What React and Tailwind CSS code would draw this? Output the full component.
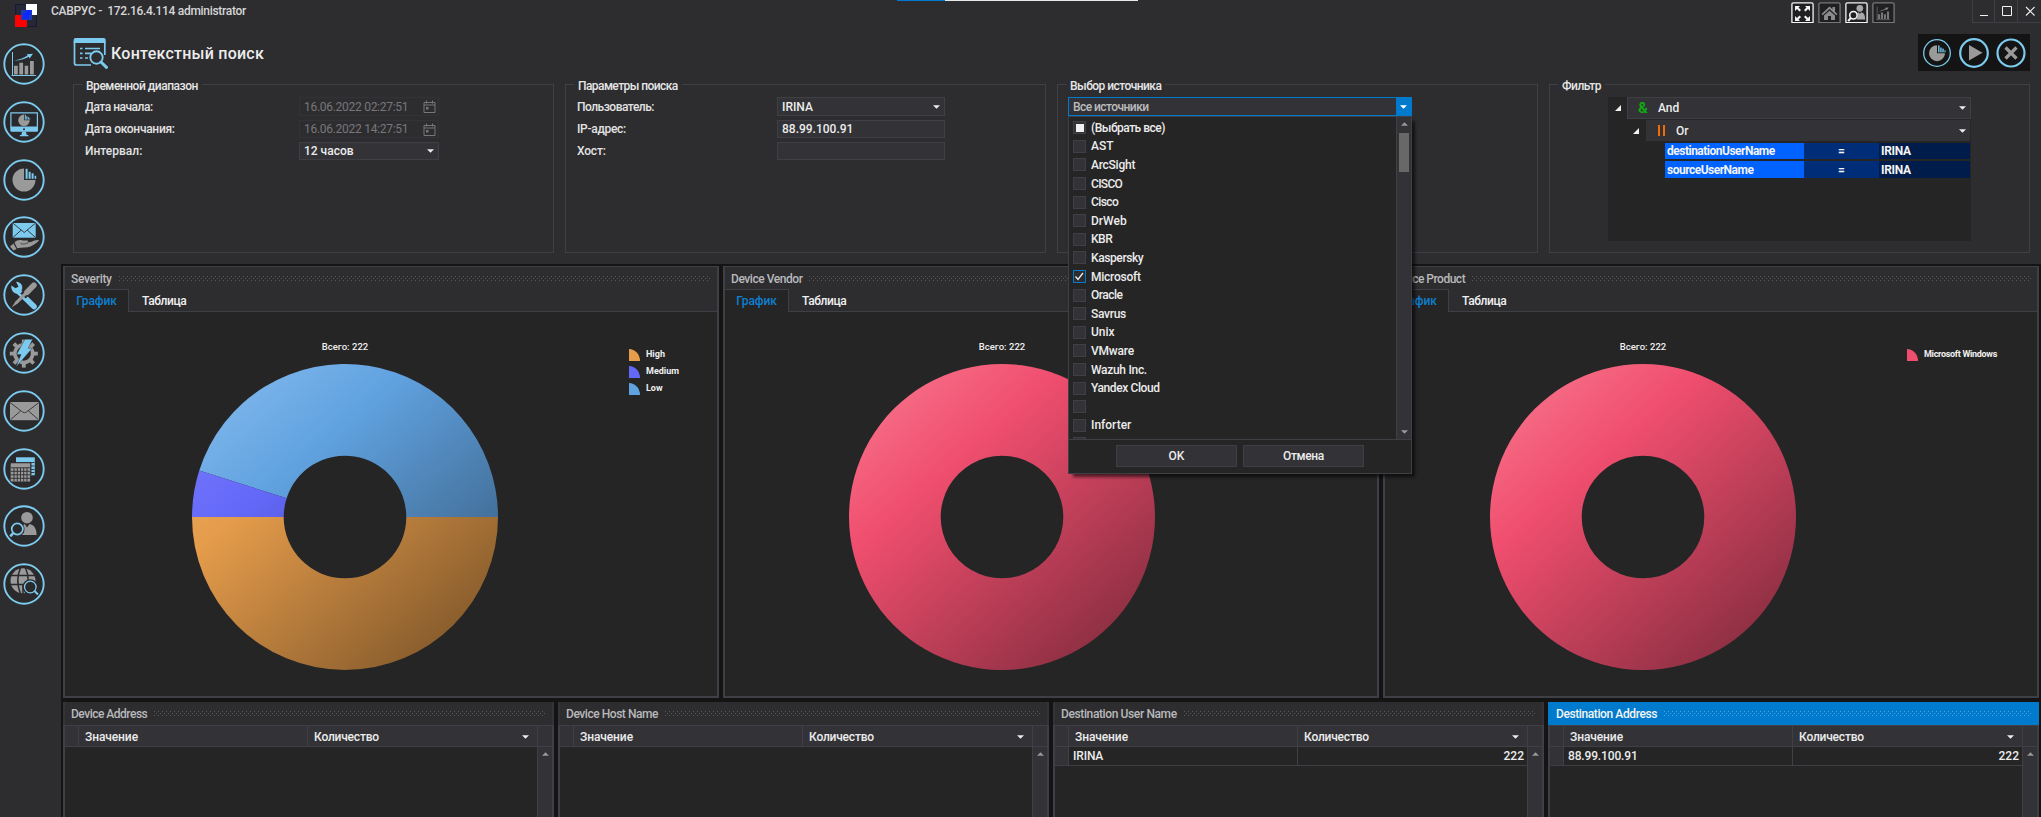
import React from "react";

const B = "#7ccbee";
const G = "#9a9a9b";
const D = "#2d2d30";

function Pie({ cx, cy, r, s = 1 }) {
  return (
    <g>
      <path d={`M${cx} ${cy - r} A${r} ${r} 0 1 0 ${cx + r} ${cy} H${cx} Z`} fill={G} />
      <g fill={B} transform={`translate(${cx + 1.6 * s} ${cy - r + 0.3 * s}) scale(${s})`}>
        <rect x="0" y="0" width="2" height="10" />
        <rect x="3" y="3" width="2" height="7" />
        <rect x="6" y="4.5" width="2" height="5.5" />
        <rect x="9" y="7" width="1.6" height="3" />
      </g>
    </g>
  );
}

function BarChart({ axis, bar }) {
  return (
    <g>
      <path d="M9.5 9V32.5M8.5 32.5H33" stroke={axis} strokeWidth="1" fill="none" />
      <path d="M11 22.7h3.8v8.7H11zM16.3 19.7h3.8v11.7h-3.8zM21.7 22.7h3.5v8.7h-3.5zM27 18h3.8v13.400H27z" fill={bar} />
      <path d="M11 17.500C17 17.600 21.500 16 25.800 13.800L26.600 15.600L30 10.800L23.800 11.200L24.600 12.400C20.500 15 16 16.500 11 17.500Z" fill={axis} />
    </g>
  );
}

function Person({ lens, body }) {
  return (
    <g>
      <circle cx="24" cy="12.700" r="5.800" fill={body} />
      <path d="M18.700 30C20.500 29 21.500 27 21.500 24C21.500 22 20.500 20.500 20.300 20L21.800 19L24 22.500L26.500 19C31.500 20 33.600 24 33.600 30Z" fill={body} />
      <circle cx="14.300" cy="24" r="5.600" fill="none" stroke={lens} strokeWidth="1.700" />
      <path d="M10.200 28L7.300 31.300" stroke={lens} strokeWidth="2.600" />
    </g>
  );
}

function Ring({ children }) {
  return (
    <svg viewBox="0 0 42 42" className="block h-[42px] w-[42px] shrink-0">
      <circle cx="21" cy="21" r="19.700" fill="#2a2a2d" stroke={B} strokeWidth="1.900" />
      {children}
    </svg>
  );
}

function Sidebar() {
  const teeth = [0, 45, 90, 135, 180, 225, 270, 315];
  return (
    <nav className="flex w-[61px] shrink-0 flex-col gap-[15.8px] pt-[20px] pl-[3px]">
      <Ring><BarChart axis={B} bar={G} /></Ring>
      <Ring>
        <path d="M7.900 11.800H34.400V26H7.900Z" fill="none" stroke={B} strokeWidth="1.200" />
        <path d="M7.300 26H35V29.500Q35 30.700 33.800 30.700H8.500Q7.300 30.700 7.300 29.500Z" fill={B} />
        <circle cx="21" cy="28.300" r="1" fill={D} />
        <path d="M19 30.700H23L23.600 33.800L25.500 34.200V35.200H16.800V34.200L18.500 33.800Z" fill={B} />
        <Pie cx={21} cy={19.3} r={5.8} s={0.5} />
      </Ring>
      <Ring><Pie cx={21} cy={21} r={11.5} /></Ring>
      <Ring>
        <rect x="9.700" y="7" width="23" height="14.700" fill={B} />
        <path d="M9.700 7L21.200 16.500L32.700 7M9.700 21.700L18.300 14M32.700 21.700L24.200 14" stroke={D} strokeWidth="0.900" fill="none" />
        <path d="M7 30.500L10.500 27.500L13.500 33L10.500 34.500ZM11.500 26.500C14 24 17 23.500 19.500 24.500L24 24.600C25.500 24.700 25.400 26.300 24 26.500L28 26C31 24.500 34 23.500 36 24.200C34.500 26.500 31 28.500 28 30.200C24 31.800 19 31.500 14.200 32.200Z" fill={G} />
        <path d="M17.500 27.500C20 28.500 22.500 28 25 26.800" stroke={D} strokeWidth="0.700" fill="none" />
      </Ring>
      <Ring>
        <path d="M14.500 16.500L31 32.500" stroke={B} strokeWidth="5.600" strokeLinecap="round" />
        <path d="M8.300 11.500L13 14.500L15.500 12.500L13 7.800C17.500 7.600 20.300 11.500 19 15.500L15.500 19.800C11 20 7.800 16.500 8.300 11.500Z" fill={B} />
        <path d="M20 22L31 10.500" stroke={D} strokeWidth="7.500" />
        <path d="M8.600 33.400L12.400 27.400L22.500 17.300L24.800 19.500L14.700 29.600Z" fill={G} />
        <path d="M24 18.200L30.900 11.200" stroke={G} strokeWidth="5.600" strokeLinecap="round" />
      </Ring>
      <Ring>
        <g fill={G}>
          {teeth.map((a) => (
            <rect key={a} x="18.900" y="7.600" width="3.800" height="5" transform={`rotate(${a} 20.800 21.600)`} />
          ))}
        </g>
        <circle cx="20.800" cy="21.600" r="8.900" fill="none" stroke={G} strokeWidth="3.600" />
        <path d="M22 7.200H29.600L25.200 16.300H29.300L13 35L18 22.400H13.600Z" fill={B} stroke="#2a2a2d" strokeWidth="0.400" />
      </Ring>
      <Ring>
        <rect x="7" y="12" width="29" height="18.200" fill={G} />
        <path d="M7 12.500L19.500 22Q21.500 23.500 23.500 22L36 12.500M7.500 29.700L17.500 21M35.500 29.700L25.500 21" stroke="#3a3a3d" strokeWidth="1" fill="none" />
      </Ring>
      <Ring>
        <rect x="13" y="9.300" width="18.800" height="18" fill={B} />
        <path d="M28 14.500V27M13 14.500H31.500M27 18H31.500M27 21.500H31.500M27 24.500H31.500" stroke={D} strokeWidth="0.900" />
        <rect x="7" y="14.600" width="20.800" height="19.500" fill="#2a2a2d" />
        <rect x="7.700" y="15.300" width="19.400" height="18.200" rx="0.500" fill={G} />
        <path d="M8 19.800H27M8 23.300H27M8 26.800H27M8 30.300H27M11 19.800V33.500M14.300 19.800V33.500M17.500 19.800V33.500M20.700 19.800V33.500M24 19.800V33.500" stroke={D} strokeWidth="0.900" />
      </Ring>
      <Ring><Person lens={B} body={G} /></Ring>
      <Ring>
        <circle cx="20" cy="17.800" r="12.500" fill={G} />
        <path d="M7 12.600H33M7 21.500H33M17.500 5Q12 17 17.500 31M22.500 5Q28 17 22.500 31M20 21V31" stroke="#2a2a2d" strokeWidth="1.500" fill="none" />
        <circle cx="27.300" cy="24" r="7.800" fill="#2a2a2d" />
        <circle cx="27.300" cy="24" r="5.800" fill="none" stroke={B} strokeWidth="1.300" />
        <path d="M31.500 28L35 31.500" stroke={B} strokeWidth="1.900" />
      </Ring>
    </nav>
  );
}

function Caret({ className = "", up = false }) {
  return (
    <svg viewBox="0 0 8 4" className={`block h-1 w-[7px] shrink-0 ${className}`}>
      <path d={up ? "M0 4L4 0L8 4Z" : "M0 0H8L4 4Z"} fill="currentColor" />
    </svg>
  );
}

function Group({ title, line, children }) {
  return (
    <section className="flex h-[169px] w-[481px] flex-col border border-t-0 border-[#3f3f46]">
      <div className="-mt-2 flex h-4 items-center">
        <i className="h-px w-2 bg-[#3f3f46]" />
        <h2 className={`pt-[3px] pr-1 pl-[4px] text-[12px] leading-4 font-medium whitespace-nowrap text-[#e6e6e6] ${line}`}>{title}</h2>
        <i className="h-px flex-1 bg-[#3f3f46]" />
      </div>
      {children}
    </section>
  );
}

function Calendar() {
  return (
    <svg viewBox="0 0 13 13" className="block h-[13px] w-[13px]" fill="none" stroke="#77777a">
      <path d="M1 2.500H12V12.500H1ZM1 5H12M3.500 0.500V3.500M9.500 0.500V3.500" />
      <rect x="3" y="7" width="2.500" height="2.500" fill="#77777a" stroke="none" />
    </svg>
  );
}

function Row({ label, track = "", children }) {
  return (
    <div className="flex h-full items-center justify-between">
      <span className={`text-[12px] font-medium whitespace-nowrap text-[#e2e2e2] ${track}`}>{label}</span>
      {children}
    </div>
  );
}

function Grip({ blue }) {
  const id = blue ? "gripBlue" : "grip";
  return (
    <svg className="block h-[5px] min-w-0 flex-1">
      <defs>
        <pattern id={id} width="4" height="4" patternUnits="userSpaceOnUse">
          <rect width="1" height="1" fill={blue ? "#4ba3de" : "#57575c"} />
          <rect x="2" y="2" width="1" height="1" fill={blue ? "#4ba3de" : "#57575c"} />
        </pattern>
      </defs>
      <rect width="100%" height="5" fill={`url(#${id})`} />
    </svg>
  );
}

function polar(a, r) {
  const t = (a * Math.PI) / 180;
  return `${153 + r * Math.cos(t)} ${153 - r * Math.sin(t)}`;
}
function slice(a, b) {
  const large = b - a > 180 ? 1 : 0;
  return `M${polar(a, 153)}A153 153 0 ${large} 0 ${polar(b, 153)}L${polar(b, 61.3)}A61.300 61.300 0 ${large} 1 ${polar(a, 61.3)}Z`;
}

const colors = {
  red: ["#f8788f", "#f04e6e", "#7c2a3b"],
  blue: ["#86bbee", "#60a2e0", "#335372"],
  violet: ["#7c7dfc", "#6368f8", "#33367e"],
  orange: ["#f0b06a", "#e59c4b", "#775127"],
};

function Donut({ id, parts }) {
  return (
    <svg viewBox="0 0 306 306" className="block h-[306px] w-[306px] shrink-0">
      <defs>
        {parts.map((p) => (
          <linearGradient key={p.color} id={id + p.color} gradientUnits="userSpaceOnUse" x1="20" y1="0" x2="286" y2="306">
            <stop offset="0" stopColor={colors[p.color][0]} />
            <stop offset="0.320" stopColor={colors[p.color][1]} />
            <stop offset="1" stopColor={colors[p.color][2]} />
          </linearGradient>
        ))}
      </defs>
      {parts.map((p) => (
        <path key={p.color} d={slice(p.from, p.to)} fill={`url(#${id}${p.color})`} />
      ))}
    </svg>
  );
}

function ChartPanel({ title, track, id, parts, legend, chartPad, legendPad }) {
  return (
    <section className="flex h-[432px] w-[656px] flex-col border-2 border-t border-[#3f3f46] bg-[#2d2d30]">
      <header className="flex h-[22px] items-center gap-[7px] pr-1.5 pl-1.5">
        <h3 className={`pt-px text-[12px] font-medium whitespace-nowrap text-[#b9b9bb] ${track}`}>{title}</h3>
        <Grip />
      </header>
      <div className="flex h-[23px] text-[12px] font-medium">
        <div className="flex w-[64px] items-center justify-center border-t border-r border-[#3f3f46] bg-[#252526] tracking-[-0.1px] text-[#0e7fd0]">График</div>
        <div className="flex flex-1 items-center border-b border-[#3f3f46] pt-px pl-[13px] tracking-[-0.4px] text-[#f0f0f0]">Таблица</div>
      </div>
      <div className="flex min-h-0 flex-1 bg-[#252526]">
        <div className={`flex flex-col items-center pt-7 ${chartPad}`}>
          <p className="h-[11px] pt-px text-[9.5px] leading-[11px] font-medium text-[#f0f0f0]">Всего: 222</p>
          <div className="pt-[13px]"><Donut id={id} parts={parts} /></div>
        </div>
        <ul className={`flex flex-col gap-[6px] pt-[37px] ${legendPad}`}>
          {legend.map((l) => (
            <li key={l.name} className="flex h-[11px] items-center gap-1.5">
              <svg viewBox="0 0 11 12" className="block h-3 w-[11px]"><path d="M0 0A11 12 0 0 1 11 12H0Z" fill={colors[l.color][1]} /></svg>
              <span className={`text-[9px] leading-[11px] font-bold whitespace-nowrap text-[#f0f0f0] ${l.track}`}>{l.name}</span>
            </li>
          ))}
        </ul>
      </div>
    </section>
  );
}

function TablePanel({ title, track, value, active }) {
  return (
    <section className="flex h-[115px] w-[491px] flex-col">
      <header className={`flex h-[23px] items-center gap-[7px] border-x-2 px-1.5 ${active ? "border-[#007acc] bg-[#007acc]" : "border-[#343438] bg-[#2d2d30]"}`}>
        <h3 className={`pt-px text-[12px] font-medium whitespace-nowrap ${track} ${active ? "text-[#f4f4f4]" : "text-[#b9b9bb]"}`}>{title}</h3>
        <Grip blue={active} />
      </header>
      <div className="flex flex-1 border-x-2 border-t border-[#3f3f46] bg-[#252526]">
        <div className="flex flex-1 flex-col">
          <div className="flex h-[21px] border-b border-[#3f3f46] bg-[#333337] text-[12px] font-medium text-[#ececec]">
            <div className="w-[14px] border-r border-[#3f3f46]" />
            <div className="flex w-[229px] items-center border-r border-[#3f3f46] pt-px pl-1.5 tracking-[-0.1px]">Значение</div>
            <div className="flex flex-1 items-center justify-between pt-px pr-[8px] pl-1.5 tracking-[-0.2px]">Количество<Caret /></div>
          </div>
          {value && (
            <div className="flex h-[19px] border-b border-[#3f3f46] text-[12px] font-medium text-[#ececec]">
              <div className="w-[14px] border-r border-[#3f3f46] bg-[#333337]" />
              <div className="flex w-[229px] items-center border-r border-[#3f3f46] pl-1 tracking-[-0.15px]">{value}</div>
              <div className="flex flex-1 items-center justify-end pr-[3px]">222</div>
            </div>
          )}
        </div>
        <div className="flex w-[15px] flex-col items-center border-l border-[#3f3f46] bg-[#333337]">
          <div className="h-[21px] w-full border-b border-[#3f3f46]" />
          <Caret up className="mt-[5px] text-[#999999]" />
        </div>
      </div>
    </section>
  );
}

const sources = [
  ["(Выбрать все)", "tracking-[-0.5px]"], ["AST", ""], ["ArcSight", "tracking-[-0.25px]"], ["CISCO", "tracking-[-0.7px]"],
  ["Cisco", "tracking-[-0.6px]"], ["DrWeb", ""], ["KBR", "tracking-[-0.5px]"], ["Kaspersky", "tracking-[-0.4px]"],
  ["Microsoft", "tracking-[-0.25px]"], ["Oracle", "tracking-[-0.5px]"], ["Savrus", "tracking-[-0.3px]"], ["Unix", ""],
  ["VMware", "tracking-[-0.2px]"], ["Wazuh Inc.", "tracking-[-0.3px]"], ["Yandex Cloud", "tracking-[-0.4px]"], ["", ""], ["Inforter", ""], ["", ""],
];

function Check({ state }) {
  if (state === "on")
    return (
      <svg viewBox="0 0 13 13" className="block h-[13px] w-[13px] shrink-0">
        <rect x="0.500" y="0.500" width="12" height="12" fill="#2d2d30" stroke="#007acc" />
        <path d="M2.500 6.500L5 9.500L10 3" stroke="#f1f1f1" strokeWidth="1.300" fill="none" />
      </svg>
    );
  return (
    <span className="flex h-[13px] w-[13px] shrink-0 items-center justify-center border border-[#3f3f46] bg-[#333337]">
      {state === "mid" && <i className="h-2 w-2 bg-[#f1f1f1]" />}
    </span>
  );
}

function Popup() {
  return (
    <div className="absolute top-[19px] left-0 z-10 flex h-[358px] w-[344px] flex-col border border-[#3f3f46] bg-[#252526] shadow-[4px_4px_3px_-1px_rgba(0,0,0,0.600)]">
      <div className="flex h-[323px] shrink-0 overflow-hidden border-b border-[#3f3f46]">
        <ul className="flex-1 pt-[1.5px] pl-1">
          {sources.map(([name, track], i) => (
            <li key={i} className="flex h-[18.600px] items-center gap-[5px]">
              <Check state={i === 0 ? "mid" : name === "Microsoft" ? "on" : "off"} />
              <span className={`text-[12px] font-medium whitespace-nowrap text-[#ececec] ${track}`}>{name}</span>
            </li>
          ))}
        </ul>
        <div className="flex w-[15px] flex-col items-center border-l border-[#3f3f46] bg-[#333337] pt-[5px] pb-[5px]">
          <Caret up className="text-[#999999]" />
          <div className="mt-[7px] h-[39px] w-[10px] bg-[#686868]" />
          <Caret className="mt-auto text-[#999999]" />
        </div>
      </div>
      <div className="flex justify-center gap-1.5 pt-[5px]">
        <button className="h-[22px] w-[121px] border border-[#3f3f46] bg-[#333337] text-[12px] font-medium text-[#ececec]">OK</button>
        <button className="h-[22px] w-[121px] border border-[#3f3f46] bg-[#333337] text-[12px] font-medium tracking-[-0.35px] text-[#ececec]">Отмена</button>
      </div>
    </div>
  );
}

const field = "flex items-center justify-between border border-[#3f3f46] bg-[#333337] px-1 text-[12px] font-medium text-[#ececec]";
const dateField = "flex w-[140px] items-center justify-between border border-[#333337] pr-0.5 pl-1 text-[12px] text-[#77777a]";

function Corner() {
  return (
    <svg viewBox="0 0 6 6" className="block h-1.5 w-1.5 shrink-0"><path d="M6 0V6H0Z" fill="#f1f1f1" /></svg>
  );
}

function Filter() {
  return (
    <div className="mt-[5px] ml-[58px] flex h-[144px] w-[363px] flex-col bg-[#252526]">
      <div className="flex h-[22px] items-center">
        <span className="flex w-[19px] justify-center"><Corner /></span>
        <div className="flex h-full flex-1 items-center border border-[#3f3f46] bg-[#333337] pr-1 pl-[10px] text-[12px] font-medium text-[#ececec]">
          <b className="w-[20px] text-[15px] leading-none text-[#12a612]">&amp;</b>And<Caret className="ml-auto" />
        </div>
      </div>
      <div className="mt-px flex h-[21px] items-center">
        <span className="flex w-[38px] justify-end pr-[7px]"><Corner /></span>
        <div className="mr-px flex h-full flex-1 items-center bg-[#333337] pr-1 pl-[12px] text-[12px] font-medium text-[#ececec]">
          <span className="flex w-[18px] gap-[3px]"><i className="h-[11px] w-0.5 bg-[#f06c09]" /><i className="h-[11px] w-0.5 bg-[#f06c09]" /></span>Or<Caret className="ml-auto" />
        </div>
      </div>
      <div className="mt-0.5 mr-px flex flex-col gap-[2px] pl-[57px] text-[12px] font-bold text-[#f4f4f4]">
        <div className="flex h-4 items-center">
          <span className="h-full w-[139px] bg-[#0062ff] pl-0.5 leading-4 tracking-[-0.5px]">destinationUserName</span>
          <span className="h-full w-[75px] bg-[#002d78] text-center leading-4">=</span>
          <span className="h-full flex-1 bg-[#001c4b] pl-0.5 leading-4 tracking-[-0.3px]">IRINA</span>
        </div>
        <div className="flex h-[17px] items-center">
          <span className="h-full w-[139px] bg-[#0062ff] pl-0.5 leading-[18px] tracking-[-0.5px]">sourceUserName</span>
          <span className="h-full w-[75px] bg-[#002d78] text-center leading-[18px]">=</span>
          <span className="h-full flex-1 bg-[#001c4b] pl-0.5 leading-[18px] tracking-[-0.3px]">IRINA</span>
        </div>
      </div>
    </div>
  );
}

function TopIcon({ dim, children }) {
  return (
    <svg viewBox="0 0 23 21" className="block h-[21px] w-[23px]">
      <path d="M0.900 21V2.500Q0.900 0.900 2.500 0.900H20.500Q22.100 0.900 22.100 2.500V21" fill="#202022" stroke={dim ? "#77777a" : "#f4f4f4"} strokeWidth="1.300" />
      <path d="M1 20.500H22" stroke={dim ? "#77777a" : "#f4f4f4"} strokeWidth="1" />
      {children}
    </svg>
  );
}

function TitleBar() {
  return (
    <header className="relative flex h-[23px] items-start">
      <svg viewBox="0 0 23 23" className="mt-1 ml-[15px] block h-[23px] w-[23px] shrink-0">
        <rect x="0.500" y="0.500" width="21" height="22" fill="#262838" stroke="#151a38" />
        <rect x="11" y="0" width="11" height="11" fill="#ffffff" />
        <rect x="0" y="11" width="12" height="12" fill="#ff0000" />
        <rect x="6" y="6" width="11" height="10" fill="#1c3bb5" />
        <rect x="8" y="9" width="6" height="6" fill="#0a28ff" />
        <rect x="11" y="6" width="5" height="5" fill="#0a28ff" />
      </svg>
      <p className="mt-[3px] ml-[13px] text-[12px] leading-4 font-medium tracking-[-0.3px] whitespace-pre text-[#d6d6d6]">САВРУС -  172.16.4.114 administrator</p>
      <div className="absolute top-0 left-[897px] flex h-px w-[241px]"><i className="w-12 bg-[#0078d4]" /><i className="flex-1 bg-[#e8e8e8]" /></div>
      <div className="mt-0.5 mr-[77px] ml-auto flex gap-1">
        <TopIcon>
          <g fill="#f4f4f4">
            <path d="M4 4H9L7.500 5.500L10 8L8.500 9.500L6 7L4 9ZM19 4H14L15.500 5.500L13 8L14.500 9.500L17 7L19 9ZM4 19H9L7.500 17.500L10 15L8.500 13.500L6 16L4 14ZM19 19H14L15.500 17.500L13 15L14.500 13.500L17 16L19 14Z" />
          </g>
        </TopIcon>
        <TopIcon dim><path d="M3.500 12L11.500 4.500L14.500 7.300V5H17V9.700L19.500 12L18.300 13.200L11.500 7L4.700 13.200ZM6 13.500L11.500 8.700L17 13.500V18H13V14H10V18H6Z" fill="#8a8a8c" /></TopIcon>
        <TopIcon>
          <g transform="translate(0.500 0) scale(0.530)"><circle cx="27" cy="12" r="6.300" fill="#a8a8aa" /><path d="M21 33L24 25L22 21L25 19.500L27 22L30 19.500C36 21 37 27 37 33Z" fill="#a8a8aa" /><circle cx="15" cy="25" r="7" fill="none" stroke="#f4f4f4" strokeWidth="3" /><path d="M10 30L5 36" stroke="#f4f4f4" strokeWidth="4" /></g>
        </TopIcon>
        <TopIcon dim><g transform="translate(-0.200 -0.500) scale(0.560)"><BarChart axis="#8a8a8c" bar="#77777a" /></g></TopIcon>
      </div>
      <div className="flex h-[23px] w-[69px] text-[#f1f1f1]">
        <div className="w-[23px] border border-t-0 border-[#3f3f46]"><svg viewBox="0 0 21 22" className="block"><path d="M7 15.500H15" stroke="currentColor" /></svg></div>
        <div className="w-[23px] border-r border-b border-[#3f3f46]"><svg viewBox="0 0 22 22" className="block"><path d="M7.500 6.500H16.500V15.500H7.500Z" fill="none" stroke="currentColor" /></svg></div>
        <div className="w-[23px] border-b border-[#3f3f46]"><svg viewBox="0 0 23 22" className="block"><path d="M8 7L16.500 15.500M16.500 7L8 15.500" stroke="currentColor" strokeWidth="1.100" /></svg></div>
      </div>
    </header>
  );
}

export default function App() {
  const full = [{ color: "red", from: 0, to: 359.99 }];
  return (
    <div className="h-[817px] w-[2041px] overflow-hidden bg-[#2d2d30] font-['Roboto','Liberation_Sans',sans-serif]">
      <TitleBar />
      <div className="flex">
        <Sidebar />
        <main className="flex flex-1 flex-col">
          <div className="flex h-[61px] items-start">
            <svg viewBox="0 0 36 31" className="mt-[15px] ml-[12px] block h-[31px] w-9">
              <path d="M1.500 4V25Q1.500 27 3.500 27H18M31.800 4V17" fill="none" stroke={B} strokeWidth="1.700" />
              <path d="M0.600 5V2Q0.600 0 2.600 0H30.700Q32.700 0 32.700 2V5Z" fill={B} />
              <path d="M7 10.500H9.500M7 15.300H9.500M7 20H9.500M12 10.500H27M12 15.300H18M12 20H15" stroke={B} strokeWidth="1.700" />
              <circle cx="23.500" cy="19.500" r="6.200" fill={D} stroke={B} strokeWidth="1.900" />
              <path d="M28 24L33.500 29.300" stroke={B} strokeWidth="3" strokeLinecap="round" />
            </svg>
            <h1 className="mt-[21px] ml-[2px] text-[16px] leading-5 font-medium tracking-[0.240px] text-[#ececec]">Контекстный поиск</h1>
            <div className="mt-[11px] mr-[11px] ml-auto flex h-[37px] w-[112px] items-center justify-between bg-[#141414] px-[4px]">
              <svg viewBox="0 0 30 30" className="block h-[30px] w-[30px]"><circle cx="15" cy="15" r="13.300" fill="none" stroke={B} strokeWidth="1.300" /><Pie cx={15} cy={15.2} r={8} s={0.7} /></svg>
              <svg viewBox="0 0 30 30" className="block h-[30px] w-[30px]"><circle cx="15" cy="15" r="13.800" fill="none" stroke={B} strokeWidth="2.200" /><path d="M10 7L23.500 14.700L10 22.500Z" fill={G} /></svg>
              <svg viewBox="0 0 30 30" className="block h-[30px] w-[30px]"><circle cx="15" cy="15" r="13.500" fill="none" stroke={B} strokeWidth="2.200" /><path d="M9.500 9.500L20.500 20.500M20.500 9.500L9.500 20.500" stroke={G} strokeWidth="3.200" /></svg>
            </div>
          </div>
          <div className="flex h-[180px] gap-[11px] pl-[12px]">
            <Group title="Временной диапазон" line="tracking-[-0.47px]">
              <div className="mt-[5px] ml-[11px] flex w-[354px] flex-col gap-[4px]">
                <div className="h-[19px]"><Row label="Дата начала:" track="tracking-[-0.5px]">
                  <div className={`${dateField} h-[19px]`}><span className="tracking-[-0.28px]">16.06.2022 02:27:51</span><Calendar /></div>
                </Row></div>
                <div className="h-[18px]"><Row label="Дата окончания:" track="tracking-[-0.3px]">
                  <div className={`${dateField} h-[18px]`}><span className="tracking-[-0.28px]">16.06.2022 14:27:51</span><Calendar /></div>
                </Row></div>
                <div className="h-[18px]"><Row label="Интервал:">
                  <div className={`${field} h-[18px] w-[140px]`}>12 часов<Caret /></div>
                </Row></div>
              </div>
            </Group>
            <Group title="Параметры поиска" line="tracking-[-0.57px]">
              <div className="mt-[5px] ml-[11px] flex w-[368px] flex-col gap-[4px]">
                <div className="h-[19px]"><Row label="Пользователь:" track="tracking-[-0.5px]"><div className={`${field} h-[19px] w-[168px]`}>IRINA<Caret /></div></Row></div>
                <div className="h-[18px]"><Row label="IP-адрес:" track="tracking-[-0.3px]"><div className={`${field} h-[18px] w-[168px]`}>88.99.100.91</div></Row></div>
                <div className="h-[18px]"><Row label="Хост:" track="tracking-[-0.2px]"><div className={`${field} h-[18px] w-[168px]`} /></Row></div>
              </div>
            </Group>
            <Group title="Выбор источника" line="tracking-[-0.55px]">
              <div className="relative mt-[5px] ml-[10px] h-[19px] w-[344px]">
                <div className="flex h-[19px] border border-[#007acc] bg-[#333337] text-[12px] font-medium text-[#bcbcbe]">
                  <span className="flex flex-1 items-center pl-1 tracking-[-0.55px]">Все источники</span>
                  <span className="flex w-[15px] items-center justify-center bg-[#007acc] text-white"><Caret /></span>
                </div>
                <Popup />
              </div>
            </Group>
            <Group title="Фильтр" line="tracking-[-0.5px]"><Filter /></Group>
          </div>
          <div className="flex flex-col gap-1 bg-[#141414] pt-0.5 pl-0.5">
            <div className="flex gap-1">
              <ChartPanel title="Severity" track="tracking-[-0.3px]" id="a" chartPad="pl-[127px]" legendPad="pl-[131px]"
                parts={[{ color: "blue", from: 0, to: 162.3 }, { color: "violet", from: 162.3, to: 180 }, { color: "orange", from: 180, to: 360 }]}
                legend={[{ name: "High", color: "orange", track: "" }, { name: "Medium", color: "violet", track: "" }, { name: "Low", color: "blue", track: "" }]} />
              <ChartPanel title="Device Vendor" track="tracking-[-0.45px]" id="b" chartPad="pl-[124px]" legendPad="pl-[98px]" parts={full} legend={[]} />
              <ChartPanel title="Device Product" track="tracking-[-0.5px]" id="c" chartPad="pl-[105px]" legendPad="pl-[111px]" parts={full} legend={[{ name: "Microsoft Windows", color: "red", track: "tracking-[-0.3px]" }]} />
            </div>
            <div className="flex gap-1">
              <TablePanel title="Device Address" track="tracking-[-0.5px]" />
              <TablePanel title="Device Host Name" track="tracking-[-0.45px]" />
              <TablePanel title="Destination User Name" track="tracking-[-0.38px]" value="IRINA" />
              <TablePanel title="Destination Address" track="tracking-[-0.4px]" value="88.99.100.91" active />
            </div>
          </div>
        </main>
      </div>
    </div>
  );
}
